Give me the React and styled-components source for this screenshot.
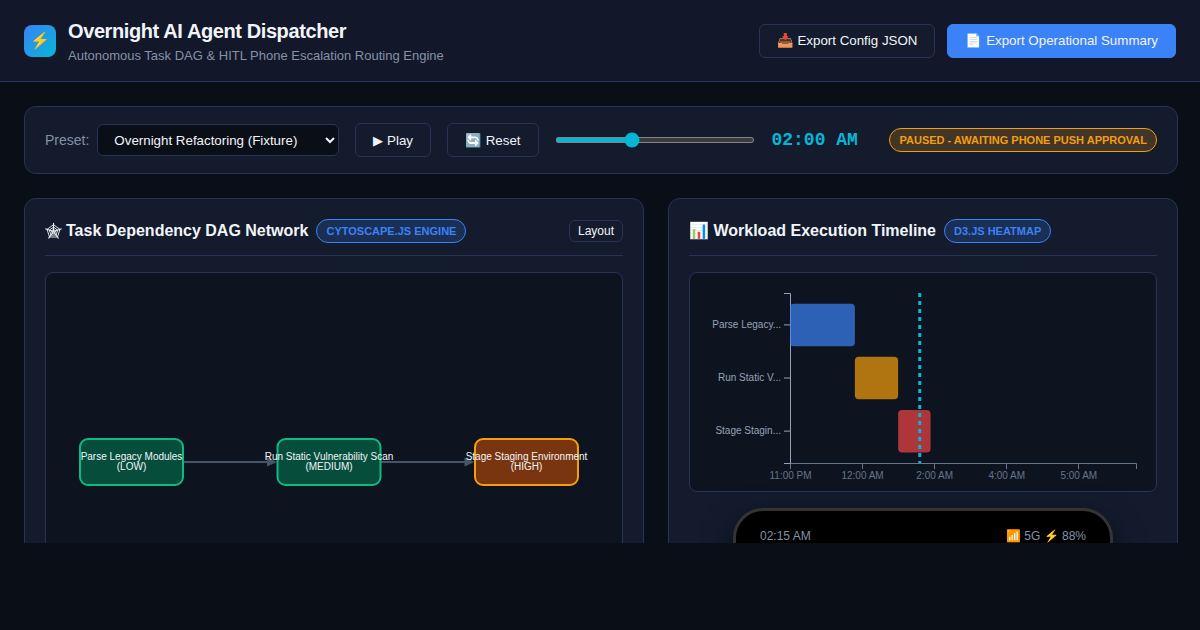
import styled, { createGlobalStyle } from "styled-components";

const GlobalStyle = createGlobalStyle`
  *, *::before, *::after {
    box-sizing: border-box;
  }

  html {
    color-scheme: dark;
  }

  body {
    margin: 0;
    background-color: #0a0e17;
    color: #f1f5f9;
    font-family: "Liberation Sans", Arial, sans-serif;
  }
`;

const Shell = styled.div`
  display: flex;
  flex-direction: column;
  height: calc(100vh - 87px);
  overflow: hidden;
`;

const Header = styled.header`
  display: flex;
  flex-shrink: 0;
  align-items: center;
  justify-content: space-between;
  height: 82px;
  padding: 0 24px;
  border-bottom: 1px solid #283457;
  background-color: #12182a;
`;

const Brand = styled.div`
  display: flex;
  align-items: center;
  gap: 12px;
`;

const Logo = styled.div`
  display: flex;
  align-items: center;
  justify-content: center;
  width: 32px;
  height: 32px;
  border-radius: 8px;
  font-size: 16px;
  background: linear-gradient(135deg, #3b82f6, #06b6d4);
`;

const AppTitle = styled.h1`
  margin: 0;
  font-size: 20px;
  line-height: 24px;
  font-weight: 700;
  letter-spacing: -0.02em;
`;

const Subtitle = styled.p`
  margin: 6px 0 0;
  font-size: 13px;
  line-height: 14px;
  color: #8492a6;
`;

const Actions = styled.div`
  display: flex;
  gap: 12px;
`;

const Button = styled.button`
  height: 34px;
  padding: 0 17px;
  border: 1px solid ${({ $primary }) => ($primary ? "#3b82f6" : "#283457")};
  border-radius: 6px;
  background-color: ${({ $primary }) => ($primary ? "#3b82f6" : "#131b2d")};
  color: #f1f5f9;
  font-family: inherit;
  white-space: nowrap;
  cursor: pointer;
`;

const SmallButton = styled(Button)`
  height: 22px;
  padding: 0 8px;
  font-size: 12px;
`;

const Main = styled.main`
  display: flex;
  flex-direction: column;
  gap: 24px;
  padding: 24px 22px 0 24px;
`;

const Card = styled.section`
  min-width: 0;
  padding: 20px;
  border: 1px solid #283457;
  border-radius: 12px;
  background-color: #131b2d;
`;

const Controls = styled(Card)`
  display: flex;
  align-items: center;
  gap: 16px;
  padding: 16px 20px;
`;

const Preset = styled.div`
  display: flex;
  align-items: center;
  gap: 8px;
`;

const PresetLabel = styled.label`
  font-size: 14px;
  color: #8492a6;
`;

const Select = styled.select`
  width: 242px;
  height: 32px;
  padding: 0 0 0 12px;
  border: 1px solid #283457;
  border-radius: 6px;
  background-color: #0a0e17;
  color: #f1f5f9;
  font-family: inherit;
`;

const Scrubber = styled.input`
  flex: 1;
  min-width: 0;
  height: 6px;
  margin: 0;
  accent-color: #06b6d4;
`;

const Clock = styled.div`
  width: 102px;
  font-family: "Liberation Mono", "Courier New", monospace;
  font-size: 18px;
  font-weight: 700;
  color: #06b6d4;
`;

const tones = {
  info: { color: "#3b82f6", background: "rgba(59, 130, 246, 0.2)" },
  warning: { color: "#f59e0b", background: "rgba(245, 158, 11, 0.2)" },
};

const Badge = styled.span`
  padding: 3px 9px;
  border: 1px solid ${({ $tone }) => tones[$tone].color};
  border-radius: 12px;
  background-color: ${({ $tone }) => tones[$tone].background};
  color: ${({ $tone }) => tones[$tone].color};
  font-size: 11px;
  line-height: 16px;
  font-weight: 700;
  text-transform: uppercase;
  white-space: nowrap;
`;

const Columns = styled.div`
  display: grid;
  grid-template-columns: 62fr 51fr;
  gap: 24px;
`;

const CardHeader = styled.div`
  display: flex;
  align-items: center;
  justify-content: space-between;
  margin-bottom: 16px;
  padding-bottom: 12px;
  border-bottom: 1px solid #283457;
`;

const CardTitle = styled.h2`
  display: flex;
  align-items: center;
  gap: 8px;
  margin: 0;
  font-size: 16px;
  line-height: 24px;
  font-weight: 700;
`;

const TitleLabel = styled.span`
  display: flex;
  align-items: center;
  gap: 4px;
`;

const Canvas = styled.div`
  height: ${({ $height }) => $height}px;
  border: 1px solid #283457;
  border-radius: 8px;
  background-color: #0e141f;
  overflow: hidden;

  svg {
    display: block;
    width: 100%;
    height: 100%;
    font-family: inherit;
  }
`;

const Phone = styled.div`
  max-width: 380px;
  height: 560px;
  margin: 16px auto 0;
  padding: 16px 24px;
  border: 3px solid #333333;
  border-radius: 30px;
  background-color: #000000;
  box-shadow: 0 10px 30px rgba(0, 0, 0, 0.5);
`;

const StatusBar = styled.div`
  display: flex;
  justify-content: space-between;
  font-size: 12px;
  line-height: 18px;
  color: #8492a6;
`;

const webRing = (radius) =>
  [0, 1, 2, 3, 4]
    .map((idx) => {
      const angle = ((idx * 72 - 90) * Math.PI) / 180;
      return `${8.5 + radius * Math.cos(angle)},${9.5 + radius * Math.sin(angle)}`;
    })
    .join(" ");

function WebIcon() {
  return (
    <svg width="17" height="18" viewBox="0 0 17 18" fill="none" stroke="#f1f5f9" aria-hidden="true">
      {[2.2, 4.4, 6.8].map((radius) => (
        <polygon key={radius} points={webRing(radius)} strokeWidth="0.9" />
      ))}
      {webRing(8.6).split(" ").map((point) => (
        <path key={point} d={`M8.5,9.5L${point}`} strokeWidth="1.1" />
      ))}
    </svg>
  );
}

const nodes = [
  { x: 85.5, name: "Parse Legacy Modules", risk: "LOW", fill: "#064e3b", stroke: "#10b981" },
  { x: 283, name: "Run Static Vulnerability Scan", risk: "MEDIUM", fill: "#064e3b", stroke: "#10b981" },
  { x: 480.5, name: "Stage Staging Environment", risk: "HIGH", fill: "#78350f", stroke: "#f59e0b" },
];

function DagGraph() {
  return (
    <svg viewBox="0 0 576 378" role="img" aria-label="Task dependency graph">
      {nodes.slice(1).map(({ x }, idx) => (
        <g key={x}>
          <line x1={nodes[idx].x + 52} x2={x - 58} y1="189" y2="189" stroke="#475569" strokeWidth="2" />
          <path d={`M${x - 62} 184.5 L${x - 52} 189 L${x - 62} 193.5 Z`} fill="#475569" />
        </g>
      ))}
      {nodes.map(({ x, name, risk, fill, stroke }) => (
        <g key={name}>
          <rect x={x - 51.5} y="166" width="103" height="46" rx="8" fill={fill} stroke={stroke} strokeWidth="2" />
          <text x={x} textAnchor="middle" fontSize="10" fill="#f1f5f9">
            <tspan x={x} y="187">{name}</tspan>
            <tspan x={x} y="197">({risk})</tspan>
          </text>
        </g>
      ))}
    </svg>
  );
}

const plot = { left: 100, top: 20, width: 346, height: 170, minutes: 480 };
const scaleX = (min) => plot.left + (min / plot.minutes) * plot.width;
const step = plot.height / 3.2;
const bandY = (idx) => plot.top + step * (idx + 0.2);

const tasks = [
  { label: "Parse Legacy...", start: 0, duration: 90, color: "#3b82f6" },
  { label: "Run Static V...", start: 90, duration: 60, color: "#f59e0b" },
  { label: "Stage Stagin...", start: 150, duration: 45, color: "#ef4444" },
];

const ticks = ["11:00 PM", "12:00 AM", "2:00 AM", "4:00 AM", "5:00 AM"];

function TimelineChart({ now }) {
  const bottom = plot.top + plot.height;
  return (
    <svg viewBox="0 0 466 218" role="img" aria-label="Workload timeline" fontSize="10">
      <g fill="none" stroke="#64748b">
        <path d={`M${plot.left + 0.5} ${bottom + 6}V${bottom + 0.5}H${plot.left + plot.width + 0.5}V${bottom + 6}`} />
        {ticks.map((label, idx) => (
          <path key={label} d={`M${Math.round(scaleX(idx * 100)) + 0.5} ${bottom}v6`} />
        ))}
      </g>
      <g fill="#64748b" textAnchor="middle">
        {ticks.map((label, idx) => (
          <text key={label} x={scaleX(idx * 100) + 0.5} y={bottom + 16}>{label}</text>
        ))}
      </g>
      <path
        d={`M${plot.left - 6} ${plot.top + 0.5}H${plot.left + 0.5}V${bottom + 0.5}H${plot.left - 6}`}
        fill="none"
        stroke="#94a3b8"
      />
      {tasks.map(({ label, start, duration, color }, idx) => {
        const mid = bandY(idx) + step * 0.4;
        return (
          <g key={label}>
            <path d={`M${plot.left - 6} ${mid}h6`} stroke="#94a3b8" />
            <text x={plot.left - 9} y={mid + 3} textAnchor="end" fill="#94a3b8">{label}</text>
            <rect
              x={scaleX(start)}
              y={bandY(idx)}
              width={scaleX(duration) - plot.left}
              height={step * 0.8}
              rx="4"
              fill={color}
              opacity="0.7"
            />
          </g>
        );
      })}
      <line
        x1={scaleX(now)}
        x2={scaleX(now)}
        y1={plot.top}
        y2={bottom}
        stroke="#06b6d4"
        strokeWidth="3"
        strokeDasharray="4 4"
      />
    </svg>
  );
}

export default function App() {
  return (
    <>
      <GlobalStyle />
      <Shell>
        <Header>
          <Brand>
            <Logo>⚡</Logo>
            <div>
              <AppTitle>Overnight AI Agent Dispatcher</AppTitle>
              <Subtitle>Autonomous Task DAG &amp; HITL Phone Escalation Routing Engine</Subtitle>
            </div>
          </Brand>
          <Actions>
            <Button type="button">📥 Export Config JSON</Button>
            <Button type="button" $primary>📄 Export Operational Summary</Button>
          </Actions>
        </Header>
        <Main>
          <Controls>
            <Preset>
              <PresetLabel htmlFor="preset">Preset:</PresetLabel>
              <Select id="preset">
                <option>Overnight Refactoring (Fixture)</option>
              </Select>
            </Preset>
            <Button type="button">▶ Play</Button>
            <Button type="button">🔄 Reset</Button>
            <Scrubber type="range" min="0" max="480" defaultValue="180" aria-label="Simulation time" />
            <Clock>02:00 AM</Clock>
            <Badge $tone="warning">Paused - Awaiting Phone Push Approval</Badge>
          </Controls>
          <Columns>
            <Card>
              <CardHeader>
                <CardTitle>
                  <TitleLabel>
                    <WebIcon />
                    Task Dependency DAG Network
                  </TitleLabel>
                  <Badge $tone="info">Cytoscape.js Engine</Badge>
                </CardTitle>
                <SmallButton type="button">Layout</SmallButton>
              </CardHeader>
              <Canvas $height={380}>
                <DagGraph />
              </Canvas>
            </Card>
            <Card>
              <CardHeader>
                <CardTitle>
                  📊 Workload Execution Timeline <Badge $tone="info">D3.js Heatmap</Badge>
                </CardTitle>
              </CardHeader>
              <Canvas $height={220}>
                <TimelineChart now={180} />
              </Canvas>
              <Phone>
                <StatusBar>
                  <span>02:15 AM</span>
                  <span>📶 5G ⚡ 88%</span>
                </StatusBar>
              </Phone>
            </Card>
          </Columns>
        </Main>
      </Shell>
    </>
  );
}
